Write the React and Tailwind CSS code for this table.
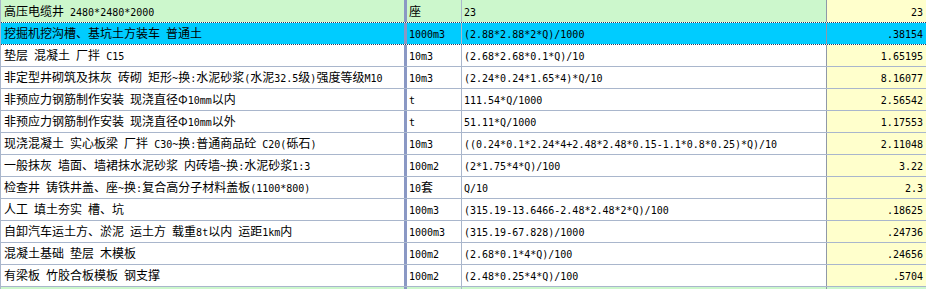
import React from "react";

const rows = [
  ["高压电缆井 2480*2480*2000", "座", "23", "23"],
  ["挖掘机挖沟槽、基坑土方装车 普通土", "1000m3", "(2.88*2.88*2*Q)/1000", ".38154"],
  ["垫层 混凝土 厂拌 C15", "10m3", "(2.68*2.68*0.1*Q)/10", "1.65195"],
  ["非定型井砌筑及抹灰 砖砌 矩形~换:水泥砂浆(水泥32.5级)强度等级M10", "10m3", "(2.24*0.24*1.65*4)*Q/10", "8.16077"],
  ["非预应力钢筋制作安装 现浇直径Φ10mm以内", "t", "111.54*Q/1000", "2.56542"],
  ["非预应力钢筋制作安装 现浇直径Φ10mm以外", "t", "51.11*Q/1000", "1.17553"],
  ["现浇混凝土 实心板梁 厂拌 C30~换:普通商品砼 C20(砾石)", "10m3", "((0.24*0.1*2.24*4+2.48*2.48*0.15-1.1*0.8*0.25)*Q)/10", "2.11048"],
  ["一般抹灰 墙面、墙裙抹水泥砂浆 内砖墙~换:水泥砂浆1:3", "100m2", "(2*1.75*4*Q)/100", "3.22"],
  ["检查井 铸铁井盖、座~换:复合高分子材料盖板(1100*800)", "10套", "Q/10", "2.3"],
  ["人工 填土夯实 槽、坑", "100m3", "(315.19-13.6466-2.48*2.48*2*Q)/100", ".18625"],
  ["自卸汽车运土方、淤泥 运土方 载重8t以内 运距1km内", "1000m3", "(315.19-67.828)/1000", ".24736"],
  ["混凝土基础 垫层 木模板", "100m2", "(2.68*0.1*4*Q)/100", ".24656"],
  ["有梁板 竹胶合板模板 钢支撑", "100m2", "(2.48*0.25*4*Q)/100", ".5704"],
];

// ascii runs in a half-width mono face, the rest in the CJK face
function Txt({ s }) {
  const parts = [];
  let buf = "";
  let ascii = null;
  for (const ch of s) {
    const a = ch.charCodeAt(0) < 128;
    if (ascii !== null && a !== ascii) {
      parts.push([ascii, buf]);
      buf = "";
    }
    ascii = a;
    buf += ch;
  }
  if (buf) parts.push([ascii, buf]);
  return (
    <span className="whitespace-pre">
      {parts.map(([a, t], i) =>
        a ? (
          <span key={i} className="font-['DejaVu_Sans_Mono',monospace] text-[10px]">
            {t}
          </span>
        ) : (
          <span key={i}>{t}</span>
        )
      )}
    </span>
  );
}

function Row({ r, idx }) {
  const head = idx === 0;
  const sel = idx === 1;
  const bg = sel ? "bg-[#00ccff]" : head ? "bg-[#ccf7cc]" : "bg-white";
  const last = sel ? "bg-[#00ccff]" : "bg-[#ffffcc]";
  const rowCls = head
    ? "h-[22px]"
    : sel
    ? "h-[23px] border-y border-dotted border-[#2a3a5a]"
    : "h-[22px] border-b border-[#a9b6cc]";
  return (
    <div className={`flex ${rowCls}`}>
      <div className={`w-[406px] shrink-0 flex items-center pl-[3px] border-r-[3px] border-r-[#8a98c4] ${bg}`}>
        <Txt s={r[0]} />
      </div>
      <div className={`w-[55px] shrink-0 flex items-center pl-[2px] border-r border-r-[#a9b6cc] ${bg}`}>
        <Txt s={r[1]} />
      </div>
      <div className={`w-[365px] shrink-0 flex items-center pl-[2px] border-r border-r-[#8f98a8] ${bg}`}>
        <Txt s={r[2]} />
      </div>
      <div className={`flex-1 flex items-center justify-end pr-[3px] ${last}`}>
        <Txt s={r[3]} />
      </div>
    </div>
  );
}

export default function App() {
  return (
    <div className="w-[926px] h-[289px] overflow-hidden bg-white border-l border-l-[#a9b6cc] text-[12px] leading-none text-black font-['Noto_Sans_CJK_SC',sans-serif]">
      {rows.map((r, i) => (
        <Row key={i} r={r} idx={i} />
      ))}
      <div className="flex h-[4px]">
        <div className="w-[406px] shrink-0 bg-[#ccf7cc] border-r-[3px] border-r-[#8a98c4]" />
        <div className="w-[55px] shrink-0 bg-[#ccf7cc] border-r border-r-[#a9b6cc]" />
        <div className="w-[365px] shrink-0 bg-[#ccf7cc] border-r border-r-[#8f98a8]" />
        <div className="flex-1 bg-[#ccf7cc]" />
      </div>
    </div>
  );
}
